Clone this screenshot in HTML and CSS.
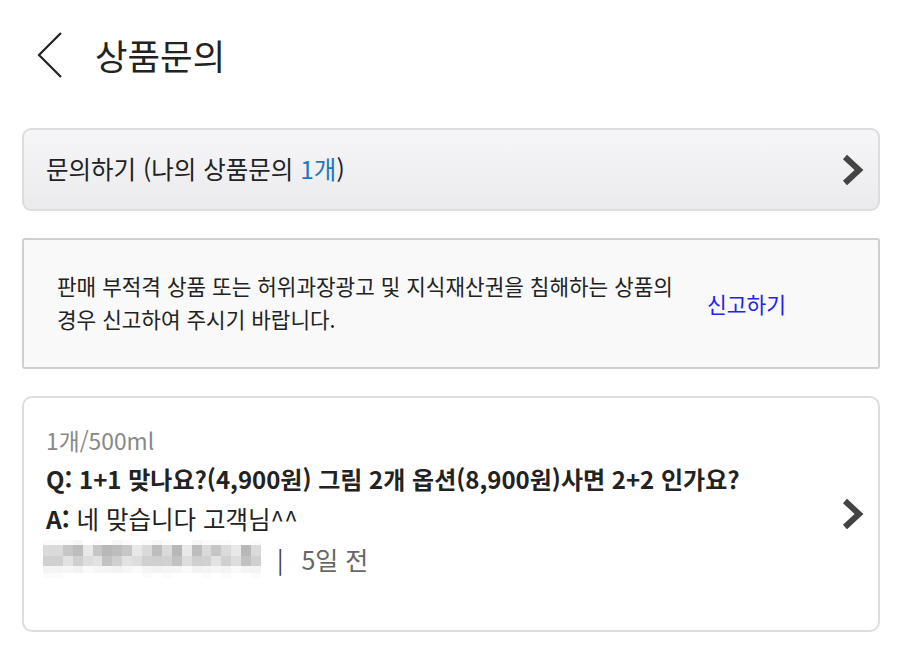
FILE: index.html
```html
<!DOCTYPE html>
<html lang="ko">
<head>
<meta charset="utf-8">
<link rel="stylesheet" href="styles.css">
</head>
<body>
<header class="header">
  <svg class="back" width="30" height="48" viewBox="0 0 30 48"><polyline points="26,2 4,24 26,46" fill="none" stroke="#222" stroke-width="2.2"/></svg>
  <h1 class="title">상품문의</h1>
</header>
<main class="content">
  <div class="card ask">
    <span class="ask-text">문의하기 (나의 상품문의 <span class="count">1개</span>)</span>
    <svg class="chev" width="22" height="32" viewBox="0 0 22 32"><polyline points="3,3 17,16 3,29" fill="none" stroke="#444" stroke-width="6"/></svg>
  </div>
  <div class="card notice">
    <p class="notice-text">판매 부적격 상품 또는 허위과장광고 및 지식재산권을 침해하는 상품의<br>경우 신고하여 주시기 바랍니다.</p>
    <a class="report">신고하기</a>
  </div>
  <div class="card qa">
    <div class="qa-body">
      <div class="option">1개/500ml</div>
      <div class="question">Q: 1+1 맞나요?(4,900원) 그림 2개 옵션(8,900원)사면 2+2 인가요?</div>
      <div class="answer"><b>A:</b> 네 맞습니다 고객님^^</div>
      <div class="meta">
        <span class="blur"><i></i><i></i><i></i><i></i><i></i><i></i><i></i><i></i><i></i><i></i><i></i><i></i><i></i><i></i><i></i><i></i><i></i><i></i><i></i><i></i><i></i><i></i></span>
        <span class="sep">|</span>
        <span class="date">5일 전</span>
      </div>
    </div>
    <svg class="chev" width="22" height="32" viewBox="0 0 22 32"><polyline points="3,3 17,16 3,29" fill="none" stroke="#444" stroke-width="6"/></svg>
  </div>
</main>
</body>
</html>
```
FILE: styles.css
```css
* { box-sizing: border-box; }
html, body { margin: 0; padding: 0; background: #fff; }
body {
  font-family: "Noto Sans CJK KR", "Noto Sans", sans-serif;
  color: #222;
  width: 900px;
}
.header {
  height: 110px;
  display: flex;
  align-items: center;
  padding-left: 35px;
}
.back { display: block; margin-right: 30px; }
.title {
  margin: 0;
  font-size: 35.4px;
  font-weight: 400;
  line-height: 1;
  color: #222;
}
.content {
  padding: 18px 20px 0 22px;
  display: flex;
  flex-direction: column;
  gap: 27px;
}
.card {
  border: 2px solid #ddd;
  display: flex;
  align-items: center;
}
.ask {
  height: 83px;
  border-radius: 9px;
  background: linear-gradient(#f6f6f8, #ebebed);
  padding: 0 14px 0 22px;
  justify-content: space-between;
}
.ask-text { font-size: 24.5px; line-height: 1; }
.count { color: #1f74c4; }
.chev { display: block; }
.notice {
  height: 131px;
  border-color: #cfcfcf;
  border-radius: 3px;
  background: #f9f9f9;
  padding-left: 33px;
}
.notice-text {
  margin: 0;
  width: 650px;
  font-size: 21.3px;
  line-height: 33px;
  color: #222;
  margin-top: -3px;
}
.report {
  font-size: 21.5px;
  color: #2222ee;
}
.qa {
  height: 236px;
  border-radius: 10px;
  background: #fff;
  padding: 0 14px 0 22px;
  justify-content: space-between;
  align-items: flex-start;
}
.qa .chev { align-self: center; }
.qa-body { display: flex; flex-direction: column; padding-top: 25px; }
.option { font-size: 22.8px; color: #888; line-height: 36px; }
.question { font-size: 24px; font-weight: 700; line-height: 40px; }
.answer { font-size: 24.5px; line-height: 40px; }
.answer b { font-weight: 700; }
.meta { display: flex; align-items: center; height: 40px; }
.blur {
  display: flex;
  width: 218px;
  height: 38px;
  margin-left: -3px;
}
.blur i {
  display: block;
  width: 10px;
  height: 100%;
  background: linear-gradient(#fbfbfb 0 5px, #dadada 5px 16px, #d0d0d0 16px 26px, #f4f4f4 26px 33px, #fbfbfb 33px);
}
.blur i:nth-child(3n) { background: linear-gradient(#fbfbfb 0 5px, #c6c6c6 5px 16px, #e2e2e2 16px 26px, #f6f6f6 26px 33px, #fff 33px); }
.blur i:nth-child(4n) { background: linear-gradient(#f6f6f6 0 5px, #bdbdbd 5px 16px, #cfcfcf 16px 26px, #f2f2f2 26px 33px, #fff 33px); }
.blur i:nth-child(5n) { background: linear-gradient(#fff 0 5px, #e8e8e8 5px 16px, #dddddd 16px 26px, #fafafa 26px 33px, #fff 33px); }
.blur i:nth-child(7n) { background: linear-gradient(#fff 0 5px, #b8b8b8 5px 16px, #c2c2c2 16px 26px, #f5f5f5 26px 33px, #fff 33px); }
.sep { font-size: 24px; color: #444; margin: 0 18px 0 16px; line-height: 1; }
.date { font-size: 25px; color: #666; line-height: 1; }
```
